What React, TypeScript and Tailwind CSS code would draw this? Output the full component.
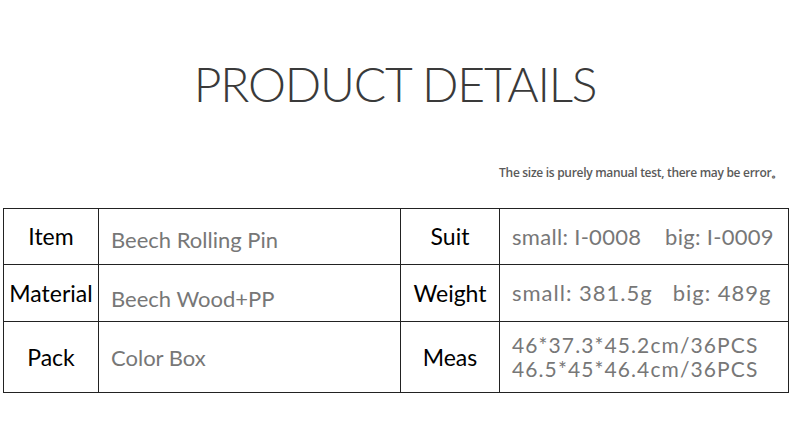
const rows = [
  { a: "Item", b: "Beech Rolling Pin", bp: "pt-[6px]", c: "Suit", d: ["small: I-0008\u00a0\u00a0\u00a0\u00a0big: I-0009"], dt: "tracking-[0.3px]", h: "h-[56px]" },
  { a: "Material", b: "Beech Wood+PP", bp: "pt-[10px]", c: "Weight", d: ["small: 381.5g\u00a0\u00a0\u00a0big: 489g"], dt: "tracking-[1px]", h: "h-[57px]" },
  { a: "Pack", b: "Color Box", bp: "pt-0", c: "Meas", d: ["46*37.3*45.2cm/36PCS", "46.5*45*46.4cm/36PCS"], dt: "tracking-[1.1px]", h: "h-[71px]" },
];

export default function App() {
  return (
    <div className="w-[790px] h-[422px] bg-white font-['Lato',sans-serif] overflow-hidden">
      <h1 className="pt-[54px] text-center text-[48px] leading-[60px] font-light tracking-[-1.2px] text-[#3a3a3a] font-['Lato',sans-serif]">
        PRODUCT DETAILS
      </h1>
      <p className="mt-[51px] pr-[7px] text-right text-[12px] leading-[16px] font-semibold text-[#5a5a5a] font-['Open_Sans',sans-serif] tracking-[-0.3px]">
        The size is purely manual test, there may be error。
      </p>
      <table className="mt-[27px] ml-[3px] border-collapse table-fixed w-[785px]">
        <colgroup>
          <col className="w-[95px]" />
          <col className="w-[302px]" />
          <col className="w-[99px]" />
          <col className="w-[289px]" />
        </colgroup>
        <tbody>
          {rows.map((r) => (
            <tr key={r.a} className={r.h}>
              <td className="border-[1.5px] border-[#222] text-center text-[23px] text-black p-0">{r.a}</td>
              <td className={`border-[1.5px] border-[#222] text-[22px] text-[#777] pl-[12px] ${r.bp}`}>{r.b}</td>
              <td className="border-[1.5px] border-[#222] text-center text-[23px] text-black p-0">{r.c}</td>
              <td
                className={`border-[1.5px] border-[#222] leading-[24px] text-[#777] pl-[12px] ${r.dt} ${
                  r.d.length > 1 ? "text-[21px]" : "text-[22px]"
                }`}
              >
                {r.d.map((l) => (
                  <div key={l} className="whitespace-pre">{l}</div>
                ))}
              </td>
            </tr>
          ))}
        </tbody>
      </table>
    </div>
  );
}
